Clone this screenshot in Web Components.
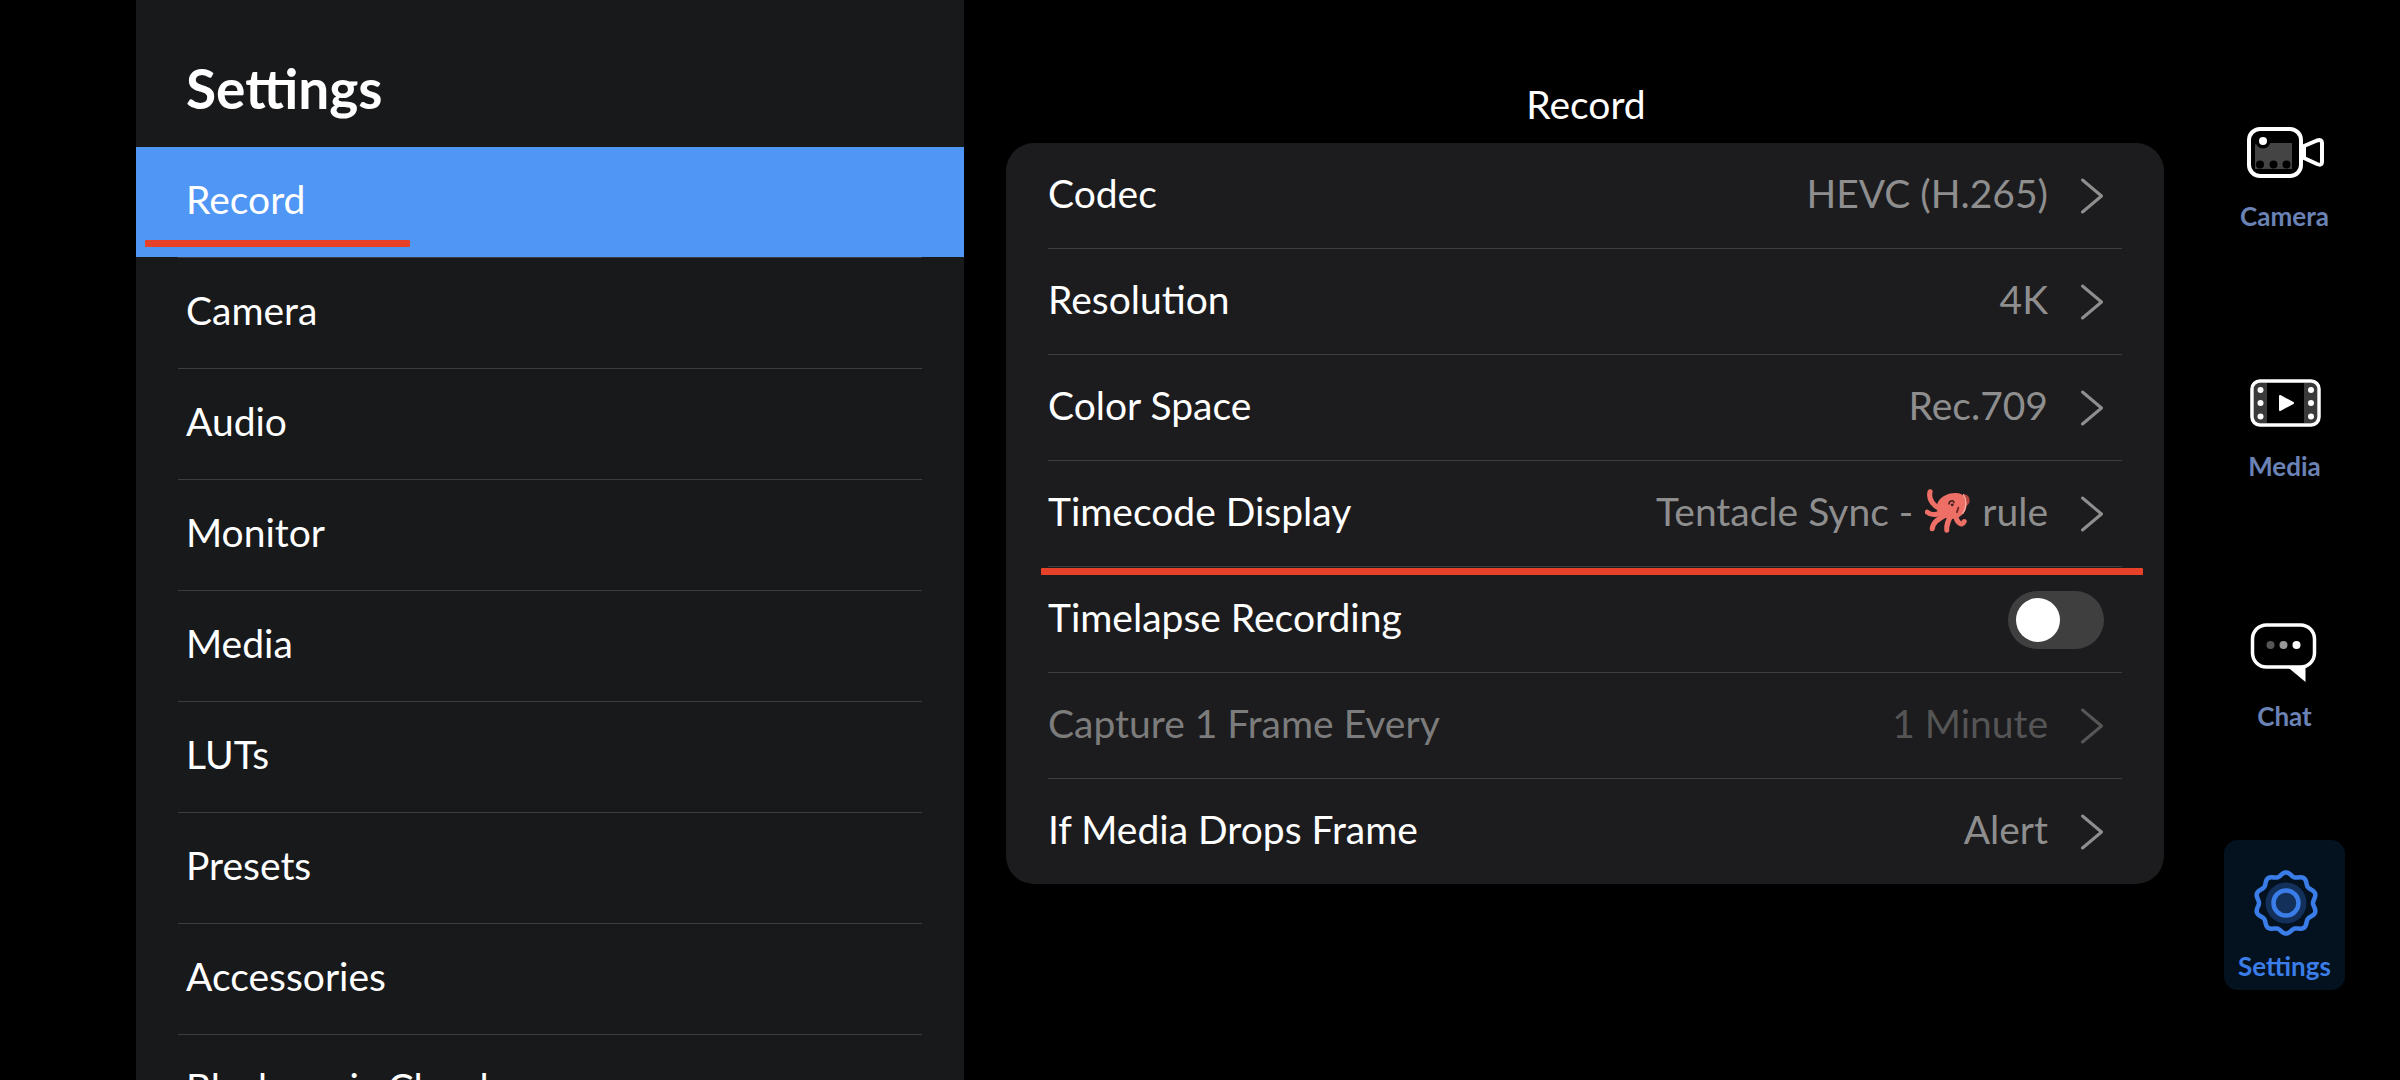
<!DOCTYPE html>
<html>
<head>
<meta charset="utf-8">
<title>Settings</title>
<style>
    html, body {
        margin: 0;
        height: 1080px;
        overflow: hidden;
        background-color: #000;
        font-family: Lato, "Open Sans", sans-serif;
        color: #fff;
    }
    .screen {
        display: flex;
        height: 1080px;
        padding-left: 136px;
        box-sizing: border-box;
    }
    svg {
        display: block;
    }
</style>
</head>
<body>
<div class="screen">
    <settings-sidebar>
        <nav-item active>Record<red-mark style="left: 9px; top: 93px; width: 265px;"></red-mark></nav-item>
        <nav-item>Camera</nav-item>
        <nav-item>Audio</nav-item>
        <nav-item>Monitor</nav-item>
        <nav-item>Media</nav-item>
        <nav-item>LUTs</nav-item>
        <nav-item>Presets</nav-item>
        <nav-item>Accessories</nav-item>
        <nav-item>Blackmagic Cloud</nav-item>
    </settings-sidebar>

    <settings-panel heading="Record">
        <setting-row><span slot="label">Codec</span>HEVC (H.265)</setting-row>
        <setting-row><span slot="label">Resolution</span>4K</setting-row>
        <setting-row><span slot="label">Color Space</span>Rec.709</setting-row>
        <setting-row>
            <span slot="label">Timecode Display</span>
            <span style="display: flex; align-items: center; gap: 12px;">
                <span>Tentacle Sync -</span>
                <svg width="45" height="46" viewBox="26 32 124 126" fill="none" stroke-linecap="round">
                    <ellipse cx="134" cy="66" rx="15" ry="17" fill="#b5453f"/>
                    <g stroke="#ee6f66" stroke-width="14">
                        <path d="M40 42C34 64 52 86 78 92"/>
                        <path d="M32 98C46 110 62 104 80 96"/>
                        <path d="M46 144C48 124 66 116 86 104"/>
                        <path d="M86 148C84 134 90 122 98 106"/>
                        <path d="M134 124C128 138 112 128 110 104"/>
                    </g>
                    <path d="M58 84C60 54 96 42 118 46C140 50 146 76 136 96C128 110 110 120 90 116C72 112 58 102 58 84Z" fill="#ee6f66"/>
                    <path d="M132 50C142 64 140 86 130 102" stroke="#f8b4ac" stroke-width="3"/>
                    <path d="M92 76C92 66 104 64 106 72" stroke="#3a1c1c" stroke-width="4"/>
                    <circle cx="101" cy="78" r="4" fill="#3a1c1c"/>
                    <path d="M118 86l-4 12" stroke="#6d2320" stroke-width="5"/>
                </svg>
                <span>rule</span>
            </span>
        </setting-row>
        <setting-row no-chevron>
            <span slot="label">Timelapse Recording</span>
            <toggle-switch></toggle-switch>
        </setting-row>
        <setting-row disabled><span slot="label">Capture 1 Frame Every</span>1 Minute</setting-row>
        <setting-row last><span slot="label">If Media Drops Frame</span>Alert</setting-row>
        <red-mark slot="overlay" style="left: 35px; top: 425px; width: 1102px;"></red-mark>
    </settings-panel>

    <rail-nav>
        <rail-item label="Camera">
            <svg width="77" height="51" viewBox="0 0 77 51" fill="none">
                <path d="M8 19a3 3 0 0 1 3-3h34v26H8Z" fill="#444"/>
                <circle cx="16" cy="14" r="7.5" fill="#000"/>
                <circle cx="16" cy="14" r="4" fill="#fff"/>
                <circle cx="13" cy="37.5" r="4" fill="#000"/>
                <circle cx="26.5" cy="37.5" r="4" fill="#000"/>
                <circle cx="39.5" cy="37.5" r="4" fill="#000"/>
                <rect x="2" y="2" width="52" height="47" rx="11" stroke="#fff" stroke-width="4"/>
                <path d="M57 19L70 13.5Q75 12 75 16V35Q75 39 70 37L57 31Z" stroke="#fff" stroke-width="4" stroke-linejoin="round"/>
            </svg>
        </rail-item>
        <rail-item label="Media">
            <svg width="71" height="48" viewBox="0 0 71 48" fill="none">
                <rect x="4" y="4" width="13" height="40" fill="#3a3a3a"/>
                <rect x="54" y="4" width="13" height="40" fill="#3a3a3a"/>
                <g fill="#fff">
                    <circle cx="10.500" cy="11" r="3"/><circle cx="10.500" cy="24" r="3"/><circle cx="10.500" cy="37.500" r="3"/>
                    <circle cx="61" cy="11" r="3"/><circle cx="61" cy="24" r="3"/><circle cx="61" cy="37.500" r="3"/>
                </g>
                <path d="M30 17L43 24L30 31Z" fill="#fff" stroke="#fff" stroke-width="2" stroke-linejoin="round"/>
                <rect x="2" y="2" width="67" height="44" rx="8" stroke="#fff" stroke-width="3.500"/>
            </svg>
        </rail-item>
        <rail-item label="Chat">
            <svg width="67" height="60" viewBox="0 0 66 60" fill="none" style="margin-right: 4px;">
                <rect x="2" y="2" width="62" height="42" rx="14" stroke="#fff" stroke-width="3.500"/>
                <path d="M37 44H55V59Z" fill="#fff"/>
                <circle cx="20" cy="22" r="4" fill="#555"/>
                <circle cx="33" cy="22" r="4" fill="#999"/>
                <circle cx="46" cy="22" r="4" fill="#fff"/>
            </svg>
        </rail-item>
        <rail-item label="Settings" active>
            <gear-icon></gear-icon>
        </rail-item>
    </rail-nav>
</div>

<script>
const sidebarTemplate = document.createElement('template');
sidebarTemplate.innerHTML = `
    <style>
        :host {
            display: block;
            flex: none;
            width: 828px;
            height: 1080px;
            overflow: hidden;
            background-color: #18191b;
        }
        h1 {
            margin: 0;
            box-sizing: border-box;
            height: 147px;
            padding: 56px 0 0 50px;
            font-size: 55px;
            line-height: 64px;
            font-weight: 700;
        }
    </style>
    <h1>Settings</h1>
    <slot></slot>
`;
class SettingsSidebar extends HTMLElement {
    constructor() {
        super();
        this.attachShadow({mode: 'open'});
        this.shadowRoot.append(sidebarTemplate.content.cloneNode(true));
    }
}
customElements.define('settings-sidebar', SettingsSidebar);

const navItemTemplate = document.createElement('template');
navItemTemplate.innerHTML = `
    <style>
        :host {
            display: block;
            position: relative;
            font-size: 39px;
        }
        .label {
            box-sizing: border-box;
            height: 110px;
            line-height: 104px;
            padding-left: 50px;
        }
        :host([active]) .label {
            background-color: #4f96f5;
        }
        .rule {
            height: 1px;
            margin: 0 42px;
            background-color: #3d3c43;
        }
    </style>
    <div class="label"><slot></slot></div>
    <div class="rule"></div>
`;
class NavItem extends HTMLElement {
    constructor() {
        super();
        this.attachShadow({mode: 'open'});
        this.shadowRoot.append(navItemTemplate.content.cloneNode(true));
    }
}
customElements.define('nav-item', NavItem);

const panelTemplate = document.createElement('template');
panelTemplate.innerHTML = `
    <style>
        :host {
            display: block;
            flex: none;
            width: 1158px;
            margin-left: 42px;
        }
        h2 {
            margin: 0;
            box-sizing: border-box;
            height: 143px;
            padding: 81px 0 0 2px;
            font-size: 39px;
            line-height: 46px;
            font-weight: 400;
            text-align: center;
        }
        .card {
            position: relative;
            background-color: #1c1c1e;
            border-radius: 28px;
        }
    </style>
    <h2></h2>
    <div class="card">
        <slot></slot>
        <slot name="overlay"></slot>
    </div>
`;
class SettingsPanel extends HTMLElement {
    constructor() {
        super();
        this.attachShadow({mode: 'open'});
        this.shadowRoot.append(panelTemplate.content.cloneNode(true));
        this.shadowRoot.querySelector('h2').textContent = this.getAttribute('heading');
    }
}
customElements.define('settings-panel', SettingsPanel);

const rowTemplate = document.createElement('template');
rowTemplate.innerHTML = `
    <style>
        :host {
            display: block;
            font-size: 39px;
        }
        .row {
            display: flex;
            align-items: center;
            box-sizing: border-box;
            height: 105px;
            padding: 0 61px 0 42px;
        }
        .label {
            flex: 1;
            color: #fff;
            padding-bottom: 6px;
        }
        .value {
            display: flex;
            align-items: center;
            color: #8e8e8e;
            padding-bottom: 6px;
        }
        svg {
            display: block;
            margin-left: 33px;
            stroke: #8e8e8e;
        }
        :host([no-chevron]) .row {
            padding-right: 60px;
        }
        :host([no-chevron]) .value {
            padding-bottom: 0;
        }
        :host([no-chevron]) svg {
            display: none;
        }
        :host([disabled]) .label {
            color: #7c7c7c;
        }
        :host([disabled]) .value {
            color: #555;
        }
        :host([disabled]) svg {
            stroke: #555;
        }
        .rule {
            height: 1px;
            margin: 0 42px;
            background-color: #3d3c43;
        }
        :host([last]) .rule {
            display: none;
        }
    </style>
    <div class="row">
        <div class="label"><slot name="label"></slot></div>
        <div class="value"><slot></slot></div>
        <svg width="22" height="36" viewBox="0 0 22 36" fill="none" stroke-width="3" stroke-linecap="round" stroke-linejoin="round">
            <path d="M1.500 2L20.500 18L1.500 34"/>
        </svg>
    </div>
    <div class="rule"></div>
`;
class SettingRow extends HTMLElement {
    constructor() {
        super();
        this.attachShadow({mode: 'open'});
        this.shadowRoot.append(rowTemplate.content.cloneNode(true));
    }
}
customElements.define('setting-row', SettingRow);

const toggleTemplate = document.createElement('template');
toggleTemplate.innerHTML = `
    <style>
        :host {
            display: flex;
            align-items: center;
            box-sizing: border-box;
            width: 96px;
            height: 58px;
            padding-left: 8px;
            border-radius: 29px;
            background-color: #3f3f3f;
        }
        .knob {
            width: 44px;
            height: 44px;
            border-radius: 50%;
            background-color: #fff;
        }
    </style>
    <div class="knob"></div>
`;
class ToggleSwitch extends HTMLElement {
    constructor() {
        super();
        this.attachShadow({mode: 'open'});
        this.shadowRoot.append(toggleTemplate.content.cloneNode(true));
    }
}
customElements.define('toggle-switch', ToggleSwitch);

const markTemplate = document.createElement('template');
markTemplate.innerHTML = `
    <style>
        :host {
            display: block;
            position: absolute;
            height: 7px;
            background-color: #e8412a;
            border-radius: 1px;
        }
    </style>
`;
class RedMark extends HTMLElement {
    constructor() {
        super();
        this.attachShadow({mode: 'open'});
        this.shadowRoot.append(markTemplate.content.cloneNode(true));
    }
}
customElements.define('red-mark', RedMark);

const railTemplate = document.createElement('template');
railTemplate.innerHTML = `
    <style>
        :host {
            display: flex;
            flex-direction: column;
            flex: none;
            gap: 100px;
            width: 121px;
            margin-left: 60px;
            padding-top: 90px;
        }
    </style>
    <slot></slot>
`;
class RailNav extends HTMLElement {
    constructor() {
        super();
        this.attachShadow({mode: 'open'});
        this.shadowRoot.append(railTemplate.content.cloneNode(true));
    }
}
customElements.define('rail-nav', RailNav);

const railItemTemplate = document.createElement('template');
railItemTemplate.innerHTML = `
    <style>
        :host {
            display: block;
            height: 150px;
            border-radius: 14px;
            font-size: 26px;
            font-weight: 700;
            color: #6b82b5;
        }
        :host([active]) {
            background-color: #04121f;
            color: #3a7de8;
        }
        .icon {
            display: flex;
            align-items: center;
            justify-content: center;
            box-sizing: border-box;
            height: 110px;
            padding: 15px 0 0 2px;
        }
        .label {
            line-height: 32px;
            text-align: center;
        }
    </style>
    <div class="icon"><slot></slot></div>
    <div class="label"></div>
`;
class RailItem extends HTMLElement {
    constructor() {
        super();
        this.attachShadow({mode: 'open'});
        this.shadowRoot.append(railItemTemplate.content.cloneNode(true));
        this.shadowRoot.querySelector('.label').textContent = this.getAttribute('label');
    }
}
customElements.define('rail-item', RailItem);

// scalloped outline, one bump per tooth
function gearPath(cx, cy, radius, depth, teeth) {
    const points = [];
    for (let i = 0; i < 180; i++) {
        const angle = i / 180 * Math.PI * 2;
        const r = radius + depth * Math.cos(angle * teeth);
        const x = cx + r * Math.sin(angle);
        const y = cy - r * Math.cos(angle);
        points.push(x.toFixed(2) + ' ' + y.toFixed(2));
    }
    return 'M' + points.join('L') + 'Z';
}

class GearIcon extends HTMLElement {
    constructor() {
        super();
        this.attachShadow({mode: 'open'});
        this.shadowRoot.innerHTML = `
            <style>
                :host { display: block; width: 66px; height: 66px; }
                svg { display: block; }
            </style>
            <svg width="66" height="66" viewBox="0 0 66 66" fill="none">
                <circle cx="33" cy="33" r="20.500" fill="#12305a"/>
                <path d="${gearPath(33, 33, 28.8, 1.8, 10)}" stroke="#3a7de8" stroke-width="4.500" stroke-linejoin="round"/>
                <circle cx="33" cy="33" r="12.500" stroke="#3a7de8" stroke-width="4.500"/>
            </svg>
        `;
    }
}
customElements.define('gear-icon', GearIcon);
</script>
</body>
</html>
